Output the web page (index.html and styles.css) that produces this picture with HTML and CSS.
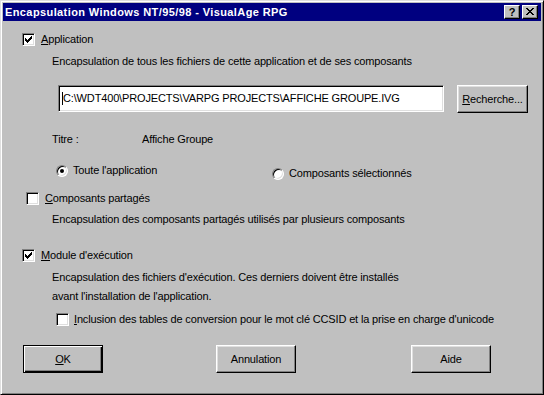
FILE: index.html
```html
<!DOCTYPE html>
<html lang="fr">
<head>
<meta charset="UTF-8">
<title>Encapsulation Windows NT/95/98 - VisualAge RPG</title>
<link rel="stylesheet" href="styles.css">
</head>
<body>
<div class="window">
  <div class="titlebar">
    <span class="title">Encapsulation Windows NT/95/98 - VisualAge RPG</span>
    <span class="tbtn help">?</span>
    <span class="tbtn close">
      <svg width="8" height="7" viewBox="0 0 8 7"><path d="M0 0h2v1H0zM6 0h2v1H6zM1 1h2v1H1zM5 1h2v1H5zM2 2h4v1H2zM3 3h2v1H3zM2 4h4v1H2zM1 5h2v1H1zM5 5h2v1H5zM0 6h2v1H0zM6 6h2v1H6z" fill="#000"/></svg>
    </span>
  </div>

  <div class="content">
    <div class="row opt-app">
      <span class="check on"></span>
      <span class="label"><u>A</u>pplication</span>
    </div>
    <div class="desc d-app">Encapsulation de tous les fichiers de cette application et de ses composants</div>

    <div class="row path-row">
      <div class="field"><span class="caret"></span>C:\WDT400\PROJECTS\VARPG PROJECTS\AFFICHE GROUPE.IVG</div>
      <button class="btn browse"><u>R</u>echerche...</button>
    </div>

    <div class="row titre-row">
      <span class="titre-label">Titre :</span>
      <span>Affiche Groupe</span>
    </div>

    <div class="row radios">
      <div class="radio-item r1"><span class="radio on"></span><span class="label">Toute l'application</span></div>
      <div class="radio-item r2"><span class="radio"></span><span class="label">Composants sélectionnés</span></div>
    </div>

    <div class="row opt-shared">
      <span class="check"></span>
      <span class="label"><u>C</u>omposants partagés</span>
    </div>
    <div class="desc d-shared">Encapsulation des composants partagés utilisés par plusieurs composants</div>

    <div class="row opt-run">
      <span class="check on"></span>
      <span class="label"><u>M</u>odule d'exécution</span>
    </div>
    <div class="desc d-run">Encapsulation des fichiers d'exécution. Ces derniers doivent être installés<br>avant l'installation de l'application.</div>

    <div class="row opt-ccsid">
      <span class="check"></span>
      <span class="label"><u>I</u>nclusion des tables de conversion pour le mot clé CCSID et la prise en charge d'unicode</span>
    </div>

    <div class="row buttons">
      <button class="btn default"><u>O</u>K</button>
      <button class="btn">Annulation</button>
      <button class="btn">Aide</button>
    </div>
  </div>
</div>
</body>
</html>
```

FILE: styles.css
```css
body {
  margin: 0;
  background: #c0c0c0;
  font-family: "Liberation Sans", Arial, sans-serif;
  font-size: 11px;
  letter-spacing: -0.15px;
  color: #000;
}

.window {
  width: 544px;
  height: 395px;
  box-sizing: border-box;
  background: #c0c0c0;
  border: 1px solid;
  border-color: #dfdfdf #000 #000 #dfdfdf;
  box-shadow: inset 1px 1px #fff, inset -1px -1px #808080;
  padding: 2px;
}

/* title bar */
.titlebar {
  height: 18px;
  background: #000080;
  color: #fff;
  display: flex;
  align-items: center;
  padding: 0 3px 0 2px;
}

.title {
  flex: 1;
  font-weight: bold;
  font-size: 11px;
  letter-spacing: 0.4px;
  white-space: nowrap;
}

.tbtn {
  width: 16px;
  height: 14px;
  box-sizing: border-box;
  background: #c0c0c0;
  border: 1px solid;
  border-color: #fff #000 #000 #fff;
  box-shadow: inset -1px -1px #808080;
  color: #000;
  display: flex;
  align-items: center;
  justify-content: center;
  font-weight: bold;
  font-size: 11px;
  line-height: 11px;
  letter-spacing: 0;
}

.help {
  margin-right: 2px;
}

.close svg {
  display: block;
  margin-top: -1px;
}

/* dialog body */
.row {
  display: flex;
  align-items: center;
  white-space: nowrap;
}

.label {
  line-height: 13px;
}

u {
  text-decoration: underline;
  text-underline-offset: 1px;
}

.desc {
  line-height: 13px;
  padding-left: 49px;
  white-space: nowrap;
}

/* checkbox */
.check {
  width: 13px;
  height: 13px;
  box-sizing: border-box;
  background: #fff;
  border: 1px solid;
  border-color: #808080 #fff #fff #808080;
  box-shadow: inset 1px 1px #000, inset -1px -1px #dfdfdf;
  margin-right: 6px;
  flex: none;
}

.check.on {
  background: #fff url("data:image/svg+xml,%3Csvg xmlns='http://www.w3.org/2000/svg' width='7' height='7'%3E%3Cpath d='M6 0h1v3H6zM5 1h1v3H5zM4 2h1v3H4zM3 3h1v3H3zM2 4h1v3H2zM1 3h1v3H1zM0 2h1v3H0z' fill='%23000'/%3E%3C/svg%3E") no-repeat 2px 2px;
}

/* radio */
.radio {
  width: 12px;
  height: 12px;
  border-radius: 50%;
  box-sizing: border-box;
  background: #fff;
  border: 1px solid;
  border-color: #808080 #fff #fff #808080;
  box-shadow: inset 1px 1px #000, inset -1px -1px #dfdfdf;
  margin-right: 5px;
  flex: none;
  position: relative;
}

.radio.on::after {
  content: "";
  position: absolute;
  left: 3px;
  top: 3px;
  width: 4px;
  height: 4px;
  border-radius: 50%;
  background: #000;
}

/* push buttons */
.btn {
  font-family: "Liberation Sans", Arial, sans-serif;
  font-size: 11px;
  letter-spacing: -0.15px;
  color: #000;
  background: #c0c0c0;
  border: 1px solid;
  border-color: #fff #000 #000 #fff;
  box-shadow: inset -1px -1px #808080, inset 1px 1px #dfdfdf;
  padding: 0;
  box-sizing: border-box;
  width: 80px;
  height: 28px;
}

.btn.default {
  border-color: #000;
  box-shadow: inset 1px 1px #fff, inset -1px -1px #000, inset -2px -2px #808080;
}

/* per-row placement */
.opt-app {
  margin-top: 12px;
  padding-left: 19px;
}

.d-app {
  margin-top: 9px;
}

.path-row {
  margin-top: 17px;
  align-items: flex-start;
}

.field {
  margin-left: 55px;
  width: 386px;
  height: 27px;
  box-sizing: border-box;
  background: #fff;
  border: 1px solid;
  border-color: #808080 #fff #fff #808080;
  box-shadow: inset 1px 1px #000, inset -1px -1px #dfdfdf;
  padding: 6px 0 0 3px;
  line-height: 13px;
  display: flex;
  align-items: flex-start;
}

.caret {
  width: 1px;
  height: 13px;
  background: #000;
}

.browse {
  margin-left: 13px;
  width: 71px;
}

.titre-row {
  margin-top: 20px;
  padding-left: 49px;
  line-height: 13px;
}

.titre-label {
  width: 90px;
}

.radios {
  margin-top: 18px;
  align-items: flex-start;
}

.radio-item {
  display: flex;
  align-items: center;
}

.r1 {
  margin-left: 53px;
  width: 216px;
}

.r2 {
  margin-top: 3px;
}

.opt-shared {
  margin-top: 12px;
  padding-left: 23px;
}

.d-shared {
  margin-top: 8px;
}

.opt-run {
  margin-top: 23px;
  padding-left: 19px;
}

.d-run {
  margin-top: 6px;
  line-height: 19px;
}

.opt-ccsid {
  margin-top: 7px;
  padding-left: 53px;
}

.opt-ccsid .check {
  margin-right: 5px;
}

.buttons {
  margin-top: 19px;
  padding-left: 20px;
}

.buttons .btn + .btn {
  margin-left: 113px;
}

.buttons .btn:last-child {
  margin-left: 115px;
}
```
